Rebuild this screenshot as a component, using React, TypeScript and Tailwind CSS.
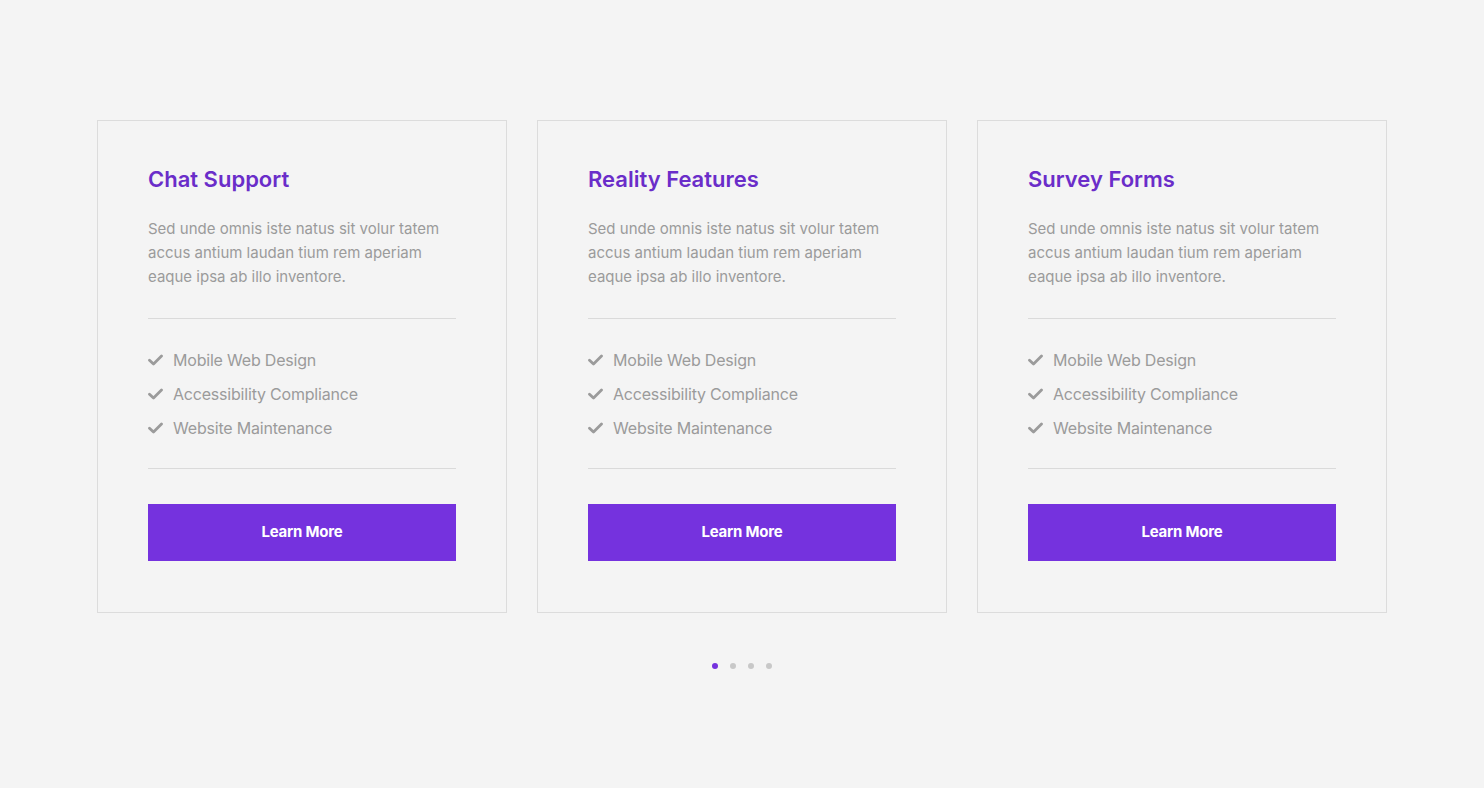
import React from 'react';

const cards = [
  { title: 'Chat Support' },
  { title: 'Reality Features' },
  { title: 'Survey Forms' },
];

const features = ['Mobile Web Design', 'Accessibility Compliance', 'Website Maintenance'];

const Check = () => (
  <svg width="15" height="12" viewBox="0 0 15 12" className="shrink-0">
    <path d="M1.5 6.2 L5.5 10 L13.5 2" fill="none" stroke="#9b9b9b" strokeWidth="2.8" strokeLinecap="round" strokeLinejoin="round" />
  </svg>
);

const Card: React.FC<{ title: string }> = ({ title }) => (
  <div className="w-[410px] border border-[#dcdcdc] px-[50px] pt-[44px] pb-[51px]">
    <h3 className="text-[22px] leading-[28px] font-semibold text-[#6a2dc9]">{title}</h3>
    <p className="mt-[24px] text-[15px] leading-[24px] text-[#9b9b9b]">
      Sed unde omnis iste natus sit volur tatem accus antium laudan tium rem aperiam eaque ipsa ab illo inventore.
    </p>
    <div className="mt-[29px] h-px bg-[#dadada]" />
    <ul className="pt-[24px] pb-[23px]">
      {features.map((f) => (
        <li key={f} className="flex items-center gap-[10px] h-[34px] text-[16px] text-[#9b9b9b] tracking-[-0.2px]">
          <Check />
          <span>{f}</span>
        </li>
      ))}
    </ul>
    <div className="h-px bg-[#dadada]" />
    <button className="mt-[35px] w-full h-[57px] bg-[#7532de] text-white text-[15px] font-bold tracking-[-0.2px]">
      Learn More
    </button>
  </div>
);

export default function App() {
  return (
    <div className="min-h-[788px] bg-[#f4f4f4] pt-[120px]" style={{ fontFamily: 'Inter, "Noto Sans", sans-serif' }}>
      <div className="flex justify-center gap-[30px]">
        {cards.map((c) => (
          <Card key={c.title} title={c.title} />
        ))}
      </div>
      <div className="flex justify-center gap-[12px] mt-[50px]">
        <span className="w-[6px] h-[6px] rounded-full bg-[#7532de]" />
        <span className="w-[6px] h-[6px] rounded-full bg-[#c8c8c8]" />
        <span className="w-[6px] h-[6px] rounded-full bg-[#c8c8c8]" />
        <span className="w-[6px] h-[6px] rounded-full bg-[#c8c8c8]" />
      </div>
    </div>
  );
}
